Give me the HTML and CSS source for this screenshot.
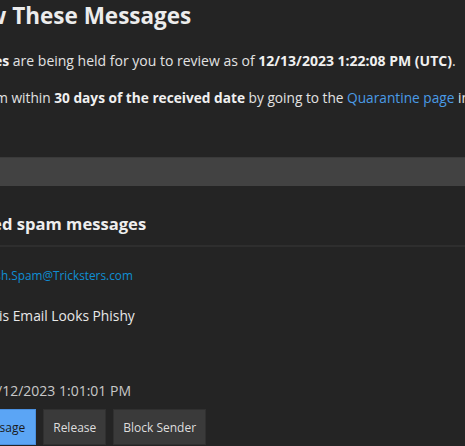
FILE: index.html
```html
<!DOCTYPE html>
<html lang="en">
<head>
<meta charset="utf-8">
<title>Review These Messages</title>
<link rel="stylesheet" href="styles.css">
</head>
<body>
<div class="page">
  <div class="intro">
    <h1 class="title">Review These Messages</h1>
    <p class="lead"><b>1 messages</b> are being held for you to review as of <b>12/13/2023 1:22:08 PM (UTC)</b>.</p>
    <p class="lead lead-second">Review them within <b>30 days of the received date</b> by going to the <a class="link" href="#">Quarantine page</a> in the Security Center.</p>
  </div>
  <div class="bar"></div>
  <div class="section">
    <h2 class="section-title">Prevented spam messages</h2>
    <div class="divider"></div>
    <div class="msg">
      <div class="row"><span class="label">Sender:</span><a class="sender" href="#">Phish.Spam@Tricksters.com</a></div>
      <div class="row row-subject"><span class="label">Subject:</span><span class="subject">This Email Looks Phishy</span></div>
      <div class="row row-date"><span class="label">Date:</span><span class="date">12/12/2023 1:01:01 PM</span></div>
    </div>
    <div class="actions">
      <button class="btn btn-primary">Review Message</button>
      <button class="btn">Release</button>
      <button class="btn">Block Sender</button>
    </div>
  </div>
</div>
</body>
</html>
```
FILE: styles.css
```css
html, body {
  margin: 0;
  padding: 0;
  background: #242424;
  overflow: hidden;
}
body {
  font-family: "Open Sans", "Noto Sans", sans-serif;
  color: #e6e6e6;
}
.page {
  width: 1000px;
}
.intro {
  margin-left: -74px;
}
.title {
  margin: 0;
  font-size: 22.5px;
  line-height: 32px;
  font-weight: 700;
  color: #ececec;
}
.lead {
  margin: 17px 0 0 4px;
  font-size: 14px;
  line-height: 24px;
  color: #e2e2e2;
}
.lead-second {
  margin-top: 13px;
  margin-left: 0;
  font-size: 13.7px;
}
.lead b {
  font-weight: 700;
  color: #f0f0f0;
}
.link {
  color: #4a9be6;
  text-decoration: none;
}
.bar {
  margin-top: 47px;
  height: 29px;
  background: #424242;
  border-top: 1px solid #3a3a3a;
  box-sizing: border-box;
}
.section {
  margin-left: -73px;
}
.section-title {
  margin: 26px 0 0;
  font-size: 16.6px;
  line-height: 24px;
  font-weight: 700;
  color: #eeeeee;
}
.divider {
  margin-top: 9px;
  height: 2px;
  background: #2e2e2e;
}
.msg {
  display: flex;
  flex-direction: column;
}
.row {
  display: flex;
  align-items: baseline;
}
.label {
  width: 51px;
  color: #bbbbbb;
  font-size: 13px;
}
.row-subject .label {
  width: 56px;
}
.row-date .label {
  width: 54px;
}
.sender {
  margin-top: 18px;
  font-size: 11.8px;
  line-height: 20px;
  color: #0f8fd4;
  text-decoration: none;
}
.subject {
  margin-top: 20px;
  font-size: 13.8px;
  line-height: 22px;
  color: #e8e8e8;
}
.date {
  margin-top: 53px;
  font-size: 14px;
  line-height: 22px;
  color: #c8c8c8;
}
.actions {
  display: flex;
  gap: 7px;
  margin-top: 7px;
  margin-left: -4px;
}
.btn {
  height: 36px;
  padding: 0 9px;
  border: 1px solid #303030;
  background: #3a3a3a;
  color: #dedede;
  font-family: "Open Sans", "Noto Sans", sans-serif;
  font-size: 12px;
}
.btn-primary {
  padding: 0 10px;
  background: #5ba5f5;
  border-color: #4a90e0;
  color: #1a1a1a;
}
```
